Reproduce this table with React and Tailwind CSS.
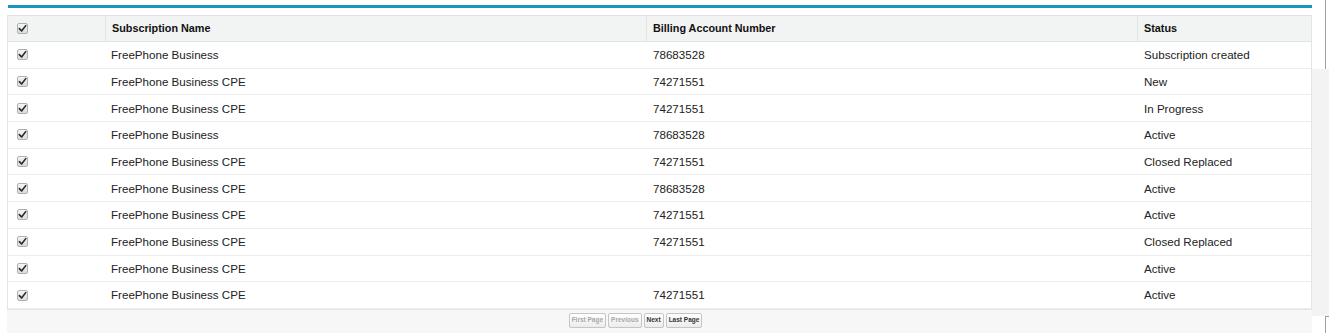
import React from 'react';

const ROWS = [
  { name: 'FreePhone Business', ban: '78683528', status: 'Subscription created' },
  { name: 'FreePhone Business CPE', ban: '74271551', status: 'New' },
  { name: 'FreePhone Business CPE', ban: '74271551', status: 'In Progress' },
  { name: 'FreePhone Business', ban: '78683528', status: 'Active' },
  { name: 'FreePhone Business CPE', ban: '74271551', status: 'Closed Replaced' },
  { name: 'FreePhone Business CPE', ban: '78683528', status: 'Active' },
  { name: 'FreePhone Business CPE', ban: '74271551', status: 'Active' },
  { name: 'FreePhone Business CPE', ban: '74271551', status: 'Closed Replaced' },
  { name: 'FreePhone Business CPE', ban: '', status: 'Active' },
  { name: 'FreePhone Business CPE', ban: '74271551', status: 'Active' },
];

const Check = () => (
  <div className="w-[11px] h-[11px] rounded-[2px] border border-[#b0b0b0] bg-gradient-to-b from-[#f4f4f4] to-[#dcdcdc] flex items-center justify-center">
    <svg width="9" height="9" viewBox="0 0 10 10">
      <path d="M1.5 5.2 L4 7.8 L8.6 1.8" fill="none" stroke="#2a2a2a" strokeWidth="1.8" strokeLinecap="round" strokeLinejoin="round" />
    </svg>
  </div>
);

const PageBtn = ({ label, disabled }) => (
  <button
    className={`h-[15px] px-[2px] rounded-[2px] border border-[#c5c5c5] bg-gradient-to-b from-white to-[#ececec] text-[6.5px] font-bold leading-none ${disabled ? 'text-[#a8a8a8]' : 'text-[#333]'}`}
  >
    {label}
  </button>
);

export default function App() {
  return (
    <div className="w-[1329px] h-[333px] bg-white flex font-['Liberation_Sans',Arial,sans-serif] overflow-hidden">
      <div className="w-[1312px] flex flex-col pt-[5px]">
        <div className="ml-[8px] h-[3px] bg-[#1797c0]" />
        <div className="h-[7px]" />
        <div className="ml-[7px] border-l border-r border-[#e4e4e4] flex flex-col">
          {/* header */}
          <div className="flex h-[27px] bg-[#f2f3f3] border-t border-b border-[#e0e3e5] text-[10.8px] font-bold text-[#111]">
            <div className="w-[98px] flex items-center pl-[9px] border-r border-[#e0e3e5]">
              <Check />
            </div>
            <div className="w-[541px] flex items-center pl-[6px] border-r border-[#e0e3e5]">Subscription Name</div>
            <div className="w-[491px] flex items-center pl-[6px] border-r border-[#e0e3e5]">Billing Account Number</div>
            <div className="flex-1 flex items-center pl-[6px]">Status</div>
          </div>
          {ROWS.map((r, i) => (
            <div key={i} className="flex h-[26.7px] border-b border-[#ececec] text-[11.6px] text-[#222]">
              <div className="w-[98px] flex items-center pl-[9px]">
                <Check />
              </div>
              <div className="w-[541px] flex items-center pl-[5px]">{r.name}</div>
              <div className="w-[491px] flex items-center pl-[6px]">{r.ban}</div>
              <div className="flex-1 flex items-center pl-[6px]">{r.status}</div>
            </div>
          ))}
        </div>
        <div className="ml-[7px] flex-1 bg-[#f7f7f7] border-t border-[#e6e6e6] flex justify-center items-start pt-[3px] pr-[48px] gap-[2px]">
          <PageBtn label="First Page" disabled />
          <PageBtn label="Previous" disabled />
          <PageBtn label="Next" />
          <PageBtn label="Last Page" />
        </div>
      </div>
      <div className="flex-1 flex flex-col">
        <div className="h-[69px] ml-[13px] border-l border-[#a0a0a0]" />
        <div className="flex-1 bg-[#f3f3f3]" />
        <div className="h-[17px] ml-[13px] border-l border-t border-[#a0a0a0] bg-white" />
      </div>
    </div>
  );
}
